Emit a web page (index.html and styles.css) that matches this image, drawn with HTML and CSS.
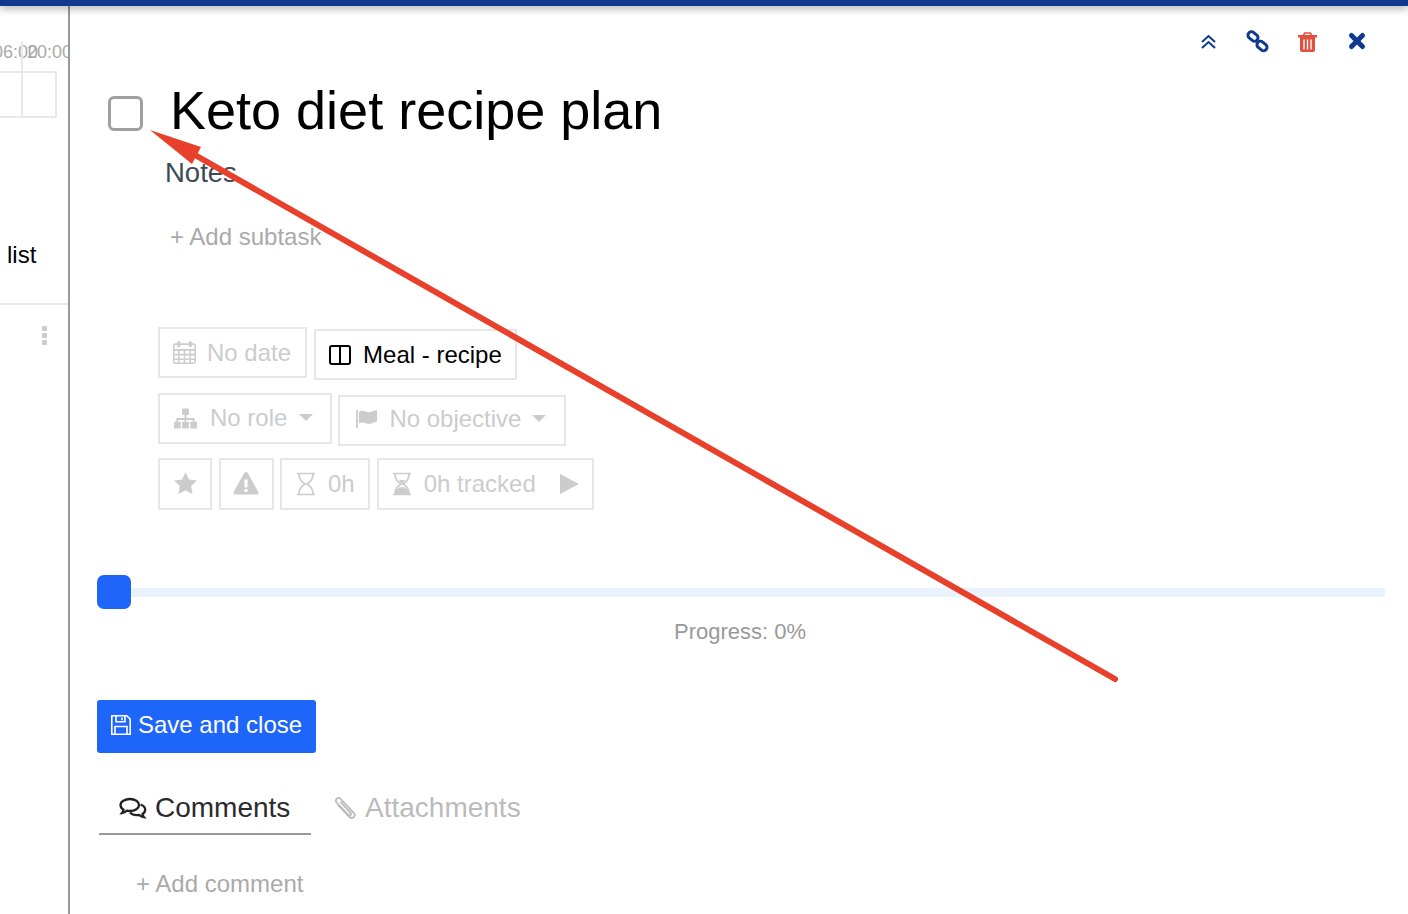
FILE: index.html
```html
<!DOCTYPE html>
<html lang="en">
<head>
<meta charset="utf-8">
<title>Keto diet recipe plan</title>
<link rel="stylesheet" href="styles.css">
</head>
<body>
<div class="topbar"></div>
<div class="layout">
  <aside class="side">
    <div class="timeline">
      <span class="time time-a">06:00</span>
      <span class="time time-b">20:00</span>
      <div class="cell"></div>
      <div class="tick"></div>
    </div>
    <div class="side-title">list</div>
    <div class="side-row">
      <span class="dots"><i></i><i></i><i></i></span>
    </div>
  </aside>
  <main class="panel">
    <div class="actions">
      <svg class="act" viewBox="0 0 24 24"><path d="M7 13l6.500-6 6.500 6M7 19l6.500-6 6.500 6" fill="none" stroke="#0f3a8f" stroke-width="2"/></svg>
      <svg class="act" viewBox="0 0 24 24"><g fill="none" stroke="#0f3a8f" stroke-width="3"><rect x="2.500" y="4" width="11" height="7" rx="3.500" transform="rotate(40 8 7.500)"/><rect x="11.500" y="13.500" width="11" height="7" rx="3.500" transform="rotate(40 17 17)"/></g></svg>
      <svg class="act" viewBox="0 0 24 24"><path d="M3 6h19v2.500H3z" fill="#e0503f"/><path d="M8.500 6.500 9.500 4h6l1 2.500" fill="none" stroke="#e0503f" stroke-width="1.600"/><path d="M5 8h15v13a2 2 0 0 1-2 2H7a2 2 0 0 1-2-2z" fill="#e0503f"/><path d="M9 10.500v10M12.500 10.500v10M16 10.500v10" stroke="#fff" stroke-width="1.400"/></svg>
      <svg class="act" viewBox="0 0 24 24"><path d="M6.500 6.500l11 11M17.500 6.500l-11 11" stroke="#0f3a8f" stroke-width="5" stroke-linecap="round"/></svg>
    </div>
    <div class="title-row">
      <span class="check"></span>
      <h1 class="title">Keto diet recipe plan</h1>
    </div>
    <div class="notes">Notes</div>
    <div class="add-subtask">+ Add subtask</div>
    <div class="chips">
      <div class="chip-row">
        <div class="chip c-date">
          <svg class="i23" viewBox="1 1 22 22"><g fill="none" stroke="#ccc" stroke-width="1.500"><rect x="1.800" y="4" width="20.400" height="18.300" rx="1.500"/><path d="M1.800 9.500h20.400M1.800 14h20.400M1.800 18.500h20.400M6.500 9.500V22M12 9.500V22M17.500 9.500V22"/></g><rect x="5" y="1" width="3" height="6" rx="1.500" fill="#ccc"/><rect x="16" y="1" width="3" height="6" rx="1.500" fill="#ccc"/></svg>
          <span>No date</span>
        </div>
        <div class="chip chip-low c-board">
          <svg class="i-board" viewBox="0 0 22 20"><path d="M3 1h16a2 2 0 0 1 2 2v14a2 2 0 0 1-2 2H3a2 2 0 0 1-2-2V3a2 2 0 0 1 2-2zM11 1v18" fill="none" stroke="#000" stroke-width="2"/></svg>
          <span class="strong">Meal - recipe</span>
        </div>
      </div>
      <div class="chip-row row-tight">
        <div class="chip c-role">
          <svg class="i25" viewBox="0 0 26 24"><path d="M9.500 2h7v7h-7zM1 16h7v7H1zM9.500 16h7v7h-7zM18 16h7v7h-7z" fill="#ccc"/><path d="M13 9v7M4.500 16v-3h17v3" fill="none" stroke="#ccc" stroke-width="2"/></svg>
          <span>No role</span>
          <span class="caret"></span>
        </div>
        <div class="chip chip-low c-obj">
          <svg class="i23" viewBox="0 0 24 24"><path d="M1 3h2v19H1z" fill="#ccc"/><path d="M4 5c5-3 8 2 13 0 2-.8 4-1.500 6-2v12c-2 .8-4 1.500-6 2.300-5 1.700-8-3-13 0z" fill="#ccc"/></svg>
          <span>No objective</span>
          <span class="caret"></span>
        </div>
      </div>
      <div class="chip-row">
        <div class="chip c-icon">
          <svg class="i23" viewBox="1 1 22 22"><path d="m12 1.200 3.300 7 7.700 1-5.600 5.300 1.400 7.700-6.800-3.700-6.800 3.700 1.400-7.700L1 9.200l7.700-1z" fill="#ccc"/></svg>
        </div>
        <div class="chip c-icon c-warn">
          <svg class="i26" viewBox="0 0 26 24"><path fill-rule="evenodd" d="M13 1c.8 0 1.400.4 1.800 1.100l10.500 19c.7 1.300-.1 2.400-1.500 2.400H2.200c-1.400 0-2.200-1.100-1.500-2.400l10.500-19C11.600 1.400 12.200 1 13 1zm-1.800 7.500.4 8h2.800l.4-8zM11.400 18v3h3.200v-3z" fill="#ccc"/></svg>
        </div>
        <div class="chip c-est">
          <svg class="i20" viewBox="0 0 20 24"><path d="M1 1.500h18M1 22.500h18M3 2c0 6 3 8 6 10-3 2-6 4-6 10M17 2c0 6-3 8-6 10 3 2 6 4 6 10" fill="none" stroke="#ccc" stroke-width="1.700"/></svg>
          <span>0h</span>
        </div>
        <div class="chip c-track">
          <svg class="i20" viewBox="0 0 20 24"><path d="M1 1.500h18M1 22.500h18M3 2c0 6 3 8 6 10-3 2-6 4-6 10M17 2c0 6-3 8-6 10 3 2 6 4 6 10" fill="none" stroke="#ccc" stroke-width="1.700"/><path d="M3 22c0-4 3-7 7-7s7 3 7 7zM7 8h6c-.6 1.400-1.800 2.600-3 3.300C8.800 10.600 7.600 9.400 7 8z" fill="#ccc"/></svg>
          <span>0h tracked</span>
          <svg class="i-play" viewBox="0 0 19 22"><path d="M0 1v20l19-10z" fill="#ccc"/></svg>
        </div>
      </div>
    </div>
    <div class="slider">
      <div class="track"></div>
      <div class="thumb"></div>
    </div>
    <div class="progress">Progress: 0%</div>
    <button class="save" type="button">
      <svg class="i-save" viewBox="0 0 22 22"><g fill="none" stroke="#fff" stroke-width="1.600"><path d="M1.800 1.800h15l3.400 3.400v15H1.800z"/><path d="M6 1.800v6h9v-6M12 3.500v2.800M5 20v-7.500h12V20"/></g></svg>
      <span>Save and close</span>
    </button>
    <div class="tabs">
      <div class="tab tab-on">
        <svg class="i-com" viewBox="0 0 28 22"><g fill="none" stroke="#222" stroke-width="2.300"><path d="M11 2c5 0 9 2.500 9 6s-4 6-9 6c-1 0-2 0-3-.3C6.500 15 5 15.800 3 16c.7-.8 1.300-2 1.500-3.300C2.500 11.500 1.500 9.900 1.500 8 1.500 4.500 6 2 11 2z"/><path d="M21.500 7.500c2.800 1 4.700 3 4.700 5.300 0 1.700-1 3.200-2.700 4.200.2 1.300.8 2.400 1.500 3.200-2-.2-3.500-1-5-2.300-3.500.7-7-.2-9-2.400"/></g></svg>
        <span>Comments</span>
      </div>
      <div class="tab tab-off">
        <svg class="i-clip" viewBox="0 0 24 24"><path d="M3.500 8.500l12 12.500c3 2.800 7-1.200 4.200-4.200L7 3.500C5-.5 0 3.500 2.500 6.500l12 12.500c1.500 1.400 3.500-.6 2-2.200L6.500 6" fill="none" stroke="#bbb" stroke-width="1.800"/></svg>
        <span>Attachments</span>
      </div>
    </div>
    <div class="add-comment">+ Add comment</div>
  </main>
</div>
<svg class="annotation" viewBox="0 0 1408 914">
  <path d="M1115 679 195 155" fill="none" stroke="#e8402a" stroke-width="6" stroke-linecap="round"/>
  <path d="M150 130 201 147 192 164z" fill="#e8402a"/>
</svg>
</body>
</html>
```
FILE: styles.css
```css
* { box-sizing: border-box; }
html, body { margin: 0; padding: 0; }
body {
  width: 1408px;
  height: 914px;
  overflow: hidden;
  position: relative;
  background: #fff;
  color: #000;
  font-family: "Liberation Sans", Arial, sans-serif;
  display: flex;
  flex-direction: column;
}
.topbar {
  height: 6px;
  flex: none;
  background: #0f3a8f;
  box-shadow: 0 2px 8px rgba(0, 0, 0, .4);
  position: relative;
  z-index: 2;
}
.layout { flex: 1; display: flex; min-height: 0; }

.side {
  width: 70px;
  flex: none;
  border-right: 2px solid #999;
  overflow: hidden;
  display: flex;
  flex-direction: column;
}
.timeline { position: relative; height: 236px; flex: none; }
.time { position: absolute; top: 36px; font-size: 18px; line-height: 20px; color: #aaa; white-space: nowrap; }
.time-a { left: -7px; }
.time-b { left: 27px; }
.cell { position: absolute; left: -10px; top: 65px; width: 67px; height: 47px; border: 2px solid #e8e8e8; }
.tick { position: absolute; left: 21px; top: 36px; width: 2px; height: 76px; background: #e8e8e8; }
.side-title { height: 63px; padding: 0 0 0 7px; font-size: 24px; line-height: 26px; border-bottom: 2px solid #e6e6e6; }
.side-row { display: flex; padding: 21px 0 0 42px; }
.dots { display: flex; flex-direction: column; gap: 2px; }
.dots i { display: block; width: 5px; height: 5px; border-radius: 1px; background: #ccc; }

.panel { flex: 1; padding: 23px 23px 0 27px; min-width: 0; }
.actions { display: flex; justify-content: flex-end; gap: 26px; padding-right: 16px; height: 24px; }
.act { width: 24px; height: 24px; display: block; }

.title-row { display: flex; margin: 27px 0 0 11px; }
.check { width: 35px; height: 35px; flex: none; margin-top: 16px; border: 3px solid #a0a0a0; border-radius: 6px; }
.title { margin: 0 0 0 27px; font-size: 54px; line-height: 60px; font-weight: 400; }
.notes { margin: 17px 0 0 68px; font-size: 27.500px; line-height: 32px; color: #3c4a54; }
.add-subtask { margin: 33px 0 0 73px; font-size: 24px; line-height: 30px; color: #aaa; }

.chips { margin: 75px 0 0 61px; display: flex; flex-direction: column; gap: 13px; }
.chip-row { display: flex; align-items: flex-start; gap: 7px; }
.row-tight { gap: 6px; }
.chip-row + .chip-row + .chip-row { margin-top: -1px; }
.chip {
  height: 51px;
  display: flex;
  align-items: center;
  gap: 11px;
  padding: 0 14px 0 13px;
  border: 2px solid #e6e6e6;
  font-size: 24px;
  color: #ccc;
}
.chip-low { margin-top: 2px; }
.strong { color: #000; }
svg { display: block; flex: none; }
.i20 { width: 20px; height: 24px; }
.i23 { width: 23px; height: 23px; }
.i25 { width: 25px; height: 24px; }
.i26 { width: 26px; height: 24px; }
.i-board { width: 22px; height: 20px; }
.i-play { width: 19px; height: 22px; margin-left: 12px; }
.caret { width: 0; height: 0; border: 7px solid transparent; border-top-color: #ccc; border-bottom-width: 0; }
.c-icon { width: 54px; justify-content: center; padding: 0 0 2px; height: 52px; }
.c-warn { width: 55px; padding-right: 1px; }
.c-est { height: 52px; gap: 12px; margin-left: -1px; padding: 0 13px 0 14px; }
.c-track { height: 52px; gap: 12px; padding: 0 13px; }
.c-board { gap: 12px; padding-right: 13px; }
.c-role { gap: 12px; padding: 0 17px 2px 13px; }
.c-obj { gap: 11px; padding: 0 18px 4px 15px; }

.slider { position: relative; height: 34px; margin-top: 65px; display: flex; align-items: center; }
.track { width: 100%; height: 9px; background: #eaf2fe; }
.thumb { position: absolute; left: 0; top: 0; width: 34px; height: 34px; border-radius: 7px; background: #1f65fa; }
.progress { margin-top: 10px; padding-right: 2px; font-size: 22px; line-height: 26px; color: #999; text-align: center; }

.save {
  display: flex;
  align-items: center;
  gap: 6px;
  width: 219px;
  height: 53px;
  margin: 55px 0 0;
  padding: 0 0 3px 13px;
  border: 0;
  border-radius: 3px;
  background: #1e65fa;
  color: #fff;
  font: 24px "Liberation Sans", Arial, sans-serif;
}
.i-save { width: 22px; height: 22px; }

.tabs { display: flex; margin: 27px 0 0 2px; }
.tab { height: 55px; display: flex; align-items: center; font-size: 28px; }
.tab-on { width: 212px; padding: 2px 0 0 20px; gap: 8px; color: #2b2b2b; border-bottom: 2px solid #999; }
.tab-off { margin-left: 23px; gap: 7px; color: #bbb; }
.i-com { width: 28px; height: 22px; }
.i-clip { width: 24px; height: 24px; }
.add-comment { margin: 34px 0 0 39px; font-size: 24px; line-height: 30px; color: #aaa; }

.annotation { position: absolute; left: 0; top: 0; width: 1408px; height: 914px; pointer-events: none; z-index: 3; }
```
